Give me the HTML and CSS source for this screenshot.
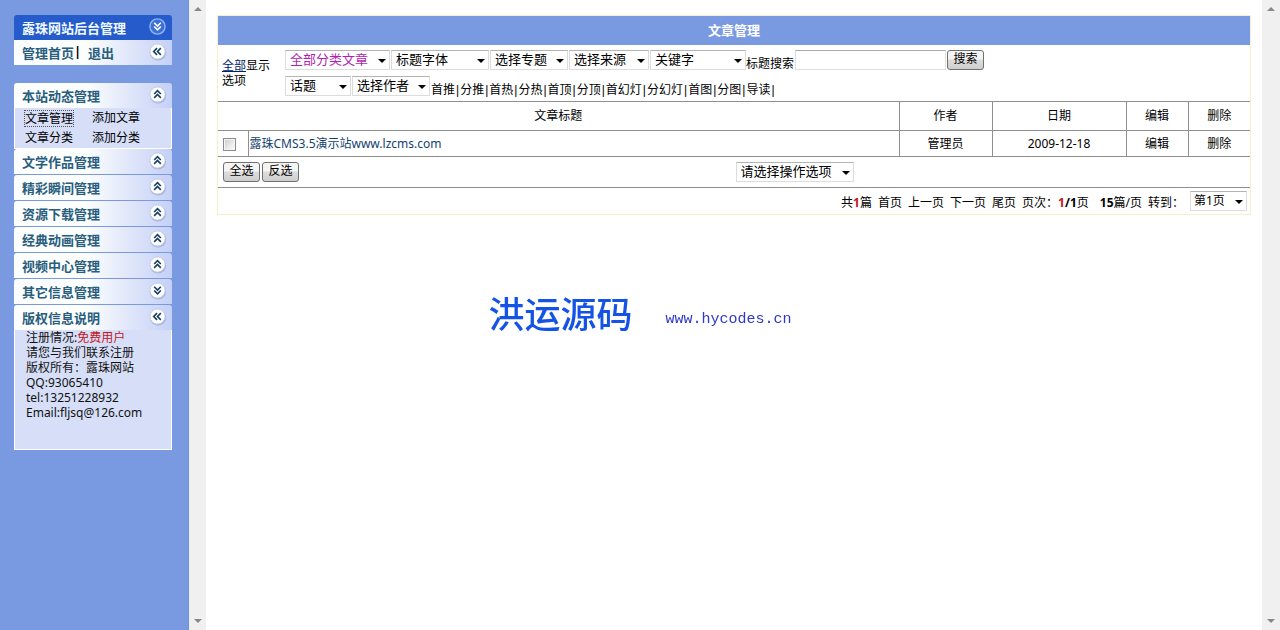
FILE: index.html
```html
<!DOCTYPE html>
<html lang="zh-CN">
<head>
<meta charset="utf-8">
<title>文章管理</title>
<link rel="stylesheet" href="styles.css">
</head>
<body>
<svg class="defs" aria-hidden="true">
  <symbol id="up" viewBox="0 0 20 20">
    <circle cx="10.500" cy="11" r="8.500" fill="#8d9fc4" opacity=".6"/>
    <circle cx="10" cy="10" r="8" fill="#fbfdff" stroke="#c3cbe0"/>
    <path d="M6.500 9.500 10 6l3.500 3.500M6.500 13.500 10 10l3.500 3.500" fill="none" stroke="#173f5f" stroke-width="1.700"/>
  </symbol>
  <symbol id="down" viewBox="0 0 20 20">
    <circle cx="10.500" cy="11" r="8.500" fill="#8d9fc4" opacity=".6"/>
    <circle cx="10" cy="10" r="8" fill="#fbfdff" stroke="#c3cbe0"/>
    <path d="M6.500 6 10 9.500 13.500 6M6.500 10 10 13.500l3.500-3.500" fill="none" stroke="#173f5f" stroke-width="1.700"/>
  </symbol>
  <symbol id="left" viewBox="0 0 20 20">
    <circle cx="10.500" cy="11" r="8.500" fill="#8d9fc4" opacity=".6"/>
    <circle cx="10" cy="10" r="8" fill="#fbfdff" stroke="#c3cbe0"/>
    <path d="M9.500 6.500 6 10l3.500 3.500M13.500 6.500 10 10l3.500 3.500" fill="none" stroke="#173f5f" stroke-width="1.700"/>
  </symbol>
  <symbol id="down-blue" viewBox="0 0 20 20">
    <circle cx="10" cy="10" r="8" fill="#3b70d6" stroke="#8fb2f0" stroke-width="1.500"/>
    <path d="M6.500 6 10 9.500 13.500 6M6.500 10 10 13.500l3.500-3.500" fill="none" stroke="#fff" stroke-width="1.700"/>
  </symbol>
</svg>

<aside class="sidebar">
  <section class="group home">
    <h1 class="bar brand">露珠网站后台管理<svg class="icon"><use href="#down-blue"/></svg></h1>
    <div class="bar flat"><a href="#">管理首页</a><span class="sep">|</span><a class="exit" href="#">退出</a><svg class="icon"><use href="#left"/></svg></div>
  </section>
  <nav class="menu">
    <h2 class="bar">本站动态管理<svg class="icon"><use href="#up"/></svg></h2>
    <div class="panel links">
      <a class="current" href="#">文章管理</a><a href="#">添加文章</a>
      <a href="#">文章分类</a><a href="#">添加分类</a>
    </div>
    <h2 class="bar">文学作品管理<svg class="icon"><use href="#up"/></svg></h2>
    <h2 class="bar">精彩瞬间管理<svg class="icon"><use href="#up"/></svg></h2>
    <h2 class="bar">资源下载管理<svg class="icon"><use href="#up"/></svg></h2>
    <h2 class="bar">经典动画管理<svg class="icon"><use href="#up"/></svg></h2>
    <h2 class="bar">视频中心管理<svg class="icon"><use href="#up"/></svg></h2>
    <h2 class="bar">其它信息管理<svg class="icon"><use href="#down"/></svg></h2>
    <h2 class="bar">版权信息说明<svg class="icon"><use href="#left"/></svg></h2>
    <div class="panel about">
      <p>注册情况:<span class="red">免费用户</span></p>
      <p>请您与我们联系注册</p>
      <p>版权所有：露珠网站</p>
      <p>QQ:93065410</p>
      <p>tel:13251228932</p>
      <p>Email:fljsq@126.com</p>
    </div>
  </nav>
</aside>
<div class="scroll" aria-hidden="true"><i class="tri-up"></i><i class="tri-down"></i></div>

<main class="main">
  <div class="sheet">
    <h2 class="caption">文章管理</h2>
    <form class="filter">
      <div class="scope"><p><a href="#">全部</a><span>显示</span></p><p>选项</p></div>
      <div class="controls">
        <div class="line">
          <span class="pick w105"><select class="magenta" aria-label="分类"><option>全部分类文章</option></select></span>
          <span class="pick w98"><select aria-label="字体"><option>标题字体</option></select></span>
          <span class="pick w78"><select aria-label="专题"><option>选择专题</option></select></span>
          <span class="pick w80"><select aria-label="来源"><option>选择来源</option></select></span>
          <span class="pick w96"><select aria-label="关键字"><option>关键字</option></select></span>
          <label class="low" for="q">标题搜索</label>
          <input class="query" id="q" type="text">
          <button class="btn" type="button">搜索</button>
        </div>
        <div class="line">
          <span class="pick w66"><select aria-label="话题"><option>话题</option></select></span>
          <span class="pick w78"><select aria-label="作者"><option>选择作者</option></select></span>
          <div class="tags low"><a href="#">首推</a><b>|</b><a href="#">分推</a><b>|</b><a href="#">首热</a><b>|</b><a href="#">分热</a><b>|</b><a href="#">首顶</a><b>|</b><a href="#">分顶</a><b>|</b><a href="#">首幻灯</a><b>|</b><a href="#">分幻灯</a><b>|</b><a href="#">首图</a><b>|</b><a href="#">分图</a><b>|</b><a href="#">导读</a><b>|</b></div>
        </div>
      </div>
    </form>
    <table class="list">
      <colgroup><col class="c-check"><col><col class="c-author"><col class="c-date"><col class="c-op"><col class="c-op"></colgroup>
      <thead>
        <tr><th colspan="2">文章标题</th><th>作者</th><th>日期</th><th>编辑</th><th>删除</th></tr>
      </thead>
      <tbody>
        <tr>
          <td class="check"><input type="checkbox" aria-label="选择文章"></td>
          <td class="title"><a href="#">露珠CMS3.5演示站www.lzcms.com</a></td>
          <td>管理员</td><td>2009-12-18</td><td><a href="#">编辑</a></td><td><a href="#">删除</a></td>
        </tr>
      </tbody>
    </table>
    <div class="actions">
      <div class="half"><button class="btn" type="button">全选</button><button class="btn" type="button">反选</button></div>
      <div class="half"><span class="pick w118"><select aria-label="操作"><option>请选择操作选项</option></select></span></div>
    </div>
    <div class="pager">
      <span>共<b class="red">1</b>篇</span>
      <a href="#">首页</a><a href="#">上一页</a><a href="#">下一页</a><a href="#">尾页</a>
      <span>页次：<b class="red">1</b><b>/1</b>页</span>
      <span class="size"><b>15</b>篇/页</span>
      <label for="page">转到：</label>
      <span class="pick short w57"><select id="page"><option>第1页</option></select></span>
    </div>
  </div>
</main>
<div class="scroll outer" aria-hidden="true"><i class="tri-up"></i><i class="tri-down"></i></div>

<div class="watermark"><span class="mark-name">洪运源码</span><span class="mark-url">www.hycodes.cn</span></div>
</body>
</html>
```
FILE: styles.css
```css
* { box-sizing: border-box; }

body {
  margin: 0;
  min-height: 100vh;
  display: flex;
  background: #fff;
  color: #000;
  font: 12px/15px "Noto Sans", "Noto Sans CJK SC", sans-serif;
}

h1, h2, p { margin: 0; font-size: inherit; }
a { color: inherit; text-decoration: none; }
.defs { position: absolute; width: 0; height: 0; }
.red { color: #c4161c; }

/* Sidebar */
.sidebar {
  flex: none;
  width: 189px;
  padding: 15px 16px 15px 14px;
  background: #7999e1;
  border-right: 1px solid #7391cf;
}
.home { margin-bottom: 18px; }
.bar {
  display: flex;
  align-items: center;
  height: 25px;
  padding: 2px 5px 0 8px;
  border-radius: 3px 3px 0 0;
  background: linear-gradient(to right, #fcfefd 45%, #c5d0f7);
  color: #295d7d;
  font-size: 13px;
  font-weight: 700;
}
.bar + .bar { margin-top: 1px; }
.bar.brand { background: #255bcb; color: #effaff; }
.bar.flat { margin-top: 0; border-radius: 0; }
.icon { width: 19px; height: 19px; margin: 0 0 4px auto; }
.sep { width: 14px; color: #000; line-height: 13px; padding-bottom: 4px; }
.panel {
  border: 1px solid #fff;
  border-top: 0;
  background: #d6dff7;
}
.links {
  display: grid;
  grid-template-columns: 67px 1fr;
  padding: 0 0 0 10px;
  line-height: 20px;
}
.links a { justify-self: start; }
.links .current { align-self: center; line-height: 15px; outline: 1px dotted #555; }
.about { min-height: 120px; padding: 0 0 29px 11px; line-height: 15px; color: #111; }

/* Scroll tracks */
.scroll {
  flex: none;
  width: 17px;
  padding: 7px 0;
  display: flex;
  flex-direction: column;
  justify-content: space-between;
  align-items: center;
  background: #f0f0f0;
}
.scroll.outer { width: 18px; }
.tri-up, .tri-down { border: 4px solid transparent; }
.tri-up { border-top: 0; border-bottom-color: #888; }
.tri-down { border-bottom: 0; border-top-color: #888; }

/* Main sheet */
.main { flex: 1; min-width: 0; padding: 15px 11px; }
.sheet { border: 1px solid #f4f0cc; }
.caption {
  height: 29px;
  background: #7999e1;
  color: #fff;
  font-size: 13px;
  line-height: 29px;
  text-align: center;
}
.filter {
  display: flex;
  padding: 5px 4px 4px;
  border-bottom: 1px solid #8f8f8f;
}
.scope { width: 63px; padding-top: 8px; }
.scope a { color: #00246b; text-decoration: underline; }
.line { display: flex; gap: 1px; height: 21px; }
.line + .line { margin-top: 5px; }
.low { padding-top: 6px; line-height: 15px; white-space: nowrap; }
.line label { margin-left: -1px; }
.tags b { margin: 0 1px; font-family: "Liberation Sans", sans-serif; font-weight: 400; }

.pick { position: relative; display: block; }
.pick::after {
  content: "";
  position: absolute;
  top: 9px;
  right: 4px;
  border: 4px solid transparent;
  border-top-color: #000;
  border-bottom: 0;
  pointer-events: none;
}
.pick select {
  display: block;
  appearance: none;
  width: 100%;
  height: 20px;
  padding: 0 0 2px 4px;
  border: 1px solid #dcdcdc;
  border-top-color: #b4b4b4;
  border-radius: 0;
  background: #fff;
  color: #000;
  font: 13px/17px "Noto Sans", "Noto Sans CJK SC", sans-serif;
}
.pick .magenta { color: #b01fb0; }
.pick.short select { font-size: 12px; padding-left: 3px; }
.w57 { width: 57px; }
.w66 { width: 66px; }
.w78 { width: 78px; }
.w80 { width: 80px; }
.w96 { width: 96px; }
.w98 { width: 98px; }
.w105 { width: 105px; }
.w118 { width: 118px; }

.query {
  width: 151px;
  height: 20px;
  border: 1px solid #dedede;
  border-top-color: #aaa;
  font: inherit;
}
.btn {
  width: 37px;
  height: 20px;
  padding: 0 0 2px;
  border: 1px solid #707070;
  border-radius: 3px;
  background: linear-gradient(#f4f4f4 45%, #dcdcdc 50%, #cfcfcf);
  color: #000;
  font: 12px/16px "Noto Sans", "Noto Sans CJK SC", sans-serif;
}

.list { width: 100%; border-collapse: collapse; table-layout: fixed; text-align: center; }
.c-check { width: 30px; }
.c-author { width: 93px; }
.c-date { width: 134px; }
.c-op { width: 62px; }
.list th { height: 28px; padding: 0; font-weight: 400; }
.list td { height: 26px; padding: 0; }
.list th, .list td { border: 1px solid #8f8f8f; border-top: 0; }
.list tr > :first-child { border-left: 0; }
.list tr > :last-child { border-right: 0; }
.list .title { padding-left: 1px; text-align: left; color: #123f70; }
.check { text-align: left; }
.check input {
  display: block;
  appearance: none;
  width: 13px;
  height: 13px;
  margin: 2px 0 0 5px;
  border: 1px solid #8b8b8b;
  background: linear-gradient(135deg, #ccc, #fff);
  box-shadow: inset 0 0 0 1px #f4f4f4;
}

.actions {
  display: flex;
  height: 31px;
  padding: 5px;
  border-bottom: 1px solid #8f8f8f;
}
.half { flex: 1; display: flex; gap: 2px; }
.half + .half { padding-left: 3px; }
.pager {
  display: flex;
  justify-content: flex-end;
  align-items: center;
  gap: 6px;
  height: 26px;
  padding: 3px 3px 0 0;
}
.pager .size { margin: 0 0 0 5px; }
.pager .pick { margin-bottom: 2px; }

/* Centered site mark laid over the page */
.watermark {
  position: fixed;
  top: 50%;
  left: 50%;
  transform: translate(-50%, -50%);
  display: flex;
  align-items: center;
  gap: 33px;
  white-space: nowrap;
  pointer-events: none;
}
.mark-name { color: #1553e6; font-size: 36px; font-weight: 500; line-height: 36px; }
.mark-url { padding-top: 10px; color: #3038c8; font: 15px/18px "Liberation Mono", monospace; }
```
